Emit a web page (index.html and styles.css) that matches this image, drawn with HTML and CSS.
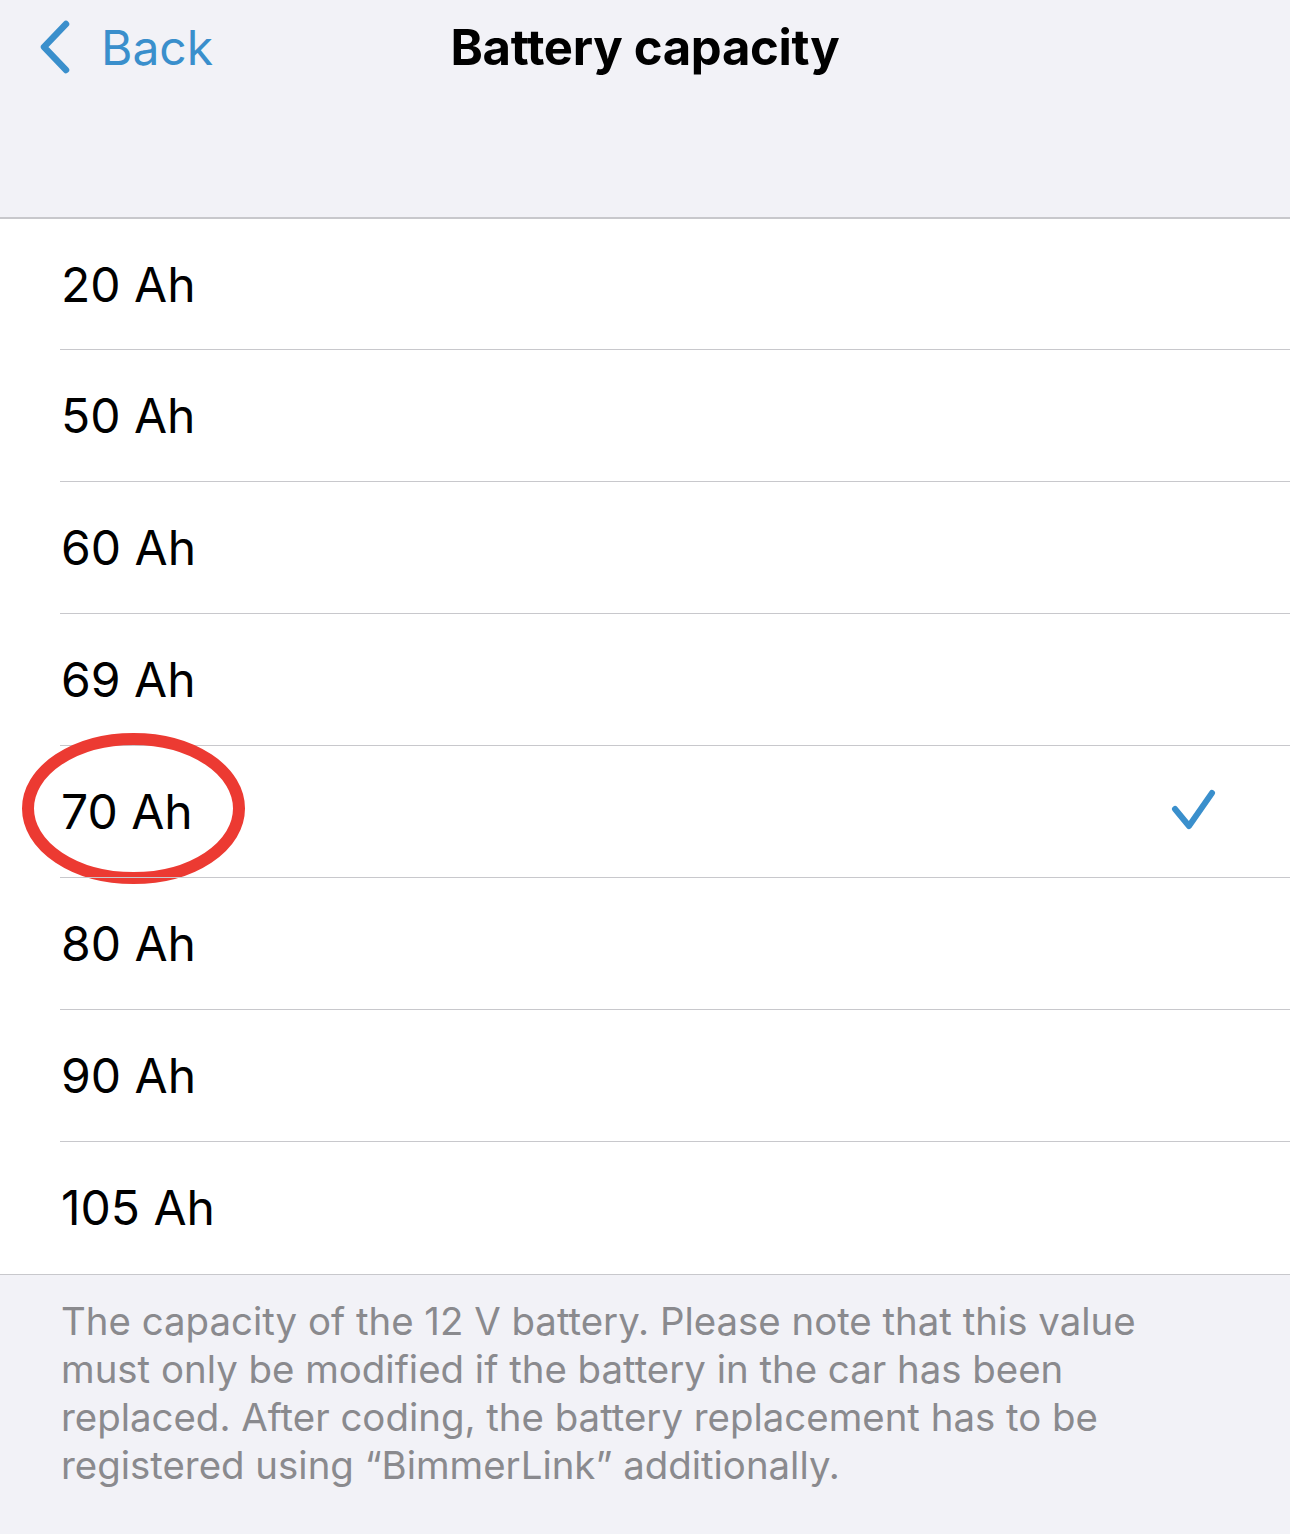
FILE: index.html
```html
<!DOCTYPE html>
<html lang="en">
<head>
<meta charset="utf-8">
<title>Battery capacity</title>
<link rel="stylesheet" href="styles.css">
</head>
<body>
<div class="screen">
  <header class="nav">
    <div class="back">
      <svg class="chev" width="40" height="60" viewBox="0 0 40 60"><path d="M30 6 L8 29 L30 52" fill="none" stroke="#3a8fcc" stroke-width="6.5" stroke-linecap="round" stroke-linejoin="round"/></svg>
      <span class="back-label">Back</span>
    </div>
    <h1 class="title">Battery capacity</h1>
  </header>
  <ul class="list">
    <li class="row"><span class="label">20 Ah</span></li>
    <li class="row"><span class="label">50 Ah</span></li>
    <li class="row"><span class="label">60 Ah</span></li>
    <li class="row"><span class="label">69 Ah</span></li>
    <li class="row selected"><span class="label">70 Ah</span>
      <svg class="check" width="50" height="50" viewBox="0 0 50 50"><path d="M5 22 L19 39 L42 6" fill="none" stroke="#3a8fcc" stroke-width="6" stroke-linecap="round" stroke-linejoin="round"/></svg>
      <svg class="circle" width="240" height="160" viewBox="0 0 240 160"><ellipse cx="115.5" cy="76.5" rx="105.5" ry="69.5" fill="none" stroke="#ec3a32" stroke-width="12"/></svg>
    </li>
    <li class="row"><span class="label">80 Ah</span></li>
    <li class="row"><span class="label">90 Ah</span></li>
    <li class="row last"><span class="label">105 Ah</span></li>
  </ul>
  <p class="footer">The capacity of the 12 V battery. Please note that this value must only be modified if the battery in the car has been replaced. After coding, the battery replacement has to be registered using “BimmerLink” additionally.</p>
</div>
</body>
</html>
```

FILE: styles.css
```css
html, body {
  margin: 0;
  padding: 0;
  background: #f2f2f7;
}
body {
  font-family: Inter, "Noto Sans", "Liberation Sans", sans-serif;
  -webkit-font-smoothing: antialiased;
}
.screen {
  width: 1290px;
  height: 1534px;
  overflow: hidden;
  background: #f2f2f7;
}
.nav {
  position: relative;
  height: 219px;
  border-bottom: 2px solid #c8c8cc;
  box-sizing: border-box;
}
.back {
  display: flex;
  align-items: center;
  gap: 25px;
  padding: 18px 0 0 36px;
  height: 60px;
}
.chev {
  display: block;
}
.back-label {
  font-size: 48px;
  color: #3a8fcc;
  line-height: 60px;
}
.title {
  position: absolute;
  left: 0;
  right: 0;
  top: 18px;
  margin: 0;
  text-align: center;
  font-size: 49px;
  font-weight: 700;
  line-height: 60px;
  color: #000;
  letter-spacing: -0.3px;
}
.list {
  list-style: none;
  margin: 0;
  padding: 0;
  background: #fff;
  border-bottom: 1px solid #c8c8cc;
}
.row {
  position: relative;
  display: flex;
  align-items: center;
  height: 131px;
  padding-left: 61px;
  padding-right: 70px;
  box-sizing: border-box;
}
.row::after {
  content: "";
  position: absolute;
  left: 60px;
  right: 0;
  bottom: 0;
  height: 1px;
  background: #c8c8cc;
}
.row + .row {
  height: 132px;
}
.row.last::after {
  display: none;
}
.label {
  font-size: 48px;
  color: #000;
  line-height: 60px;
  flex: 1;
}
.check {
  display: block;
}
.circle {
  position: absolute;
  left: 18px;
  top: -14px;
}
.footer {
  margin: 0;
  padding: 22px 100px 0 61px;
  font-size: 38.4px;
  line-height: 48px;
  color: #8a8a8e;
}
```
